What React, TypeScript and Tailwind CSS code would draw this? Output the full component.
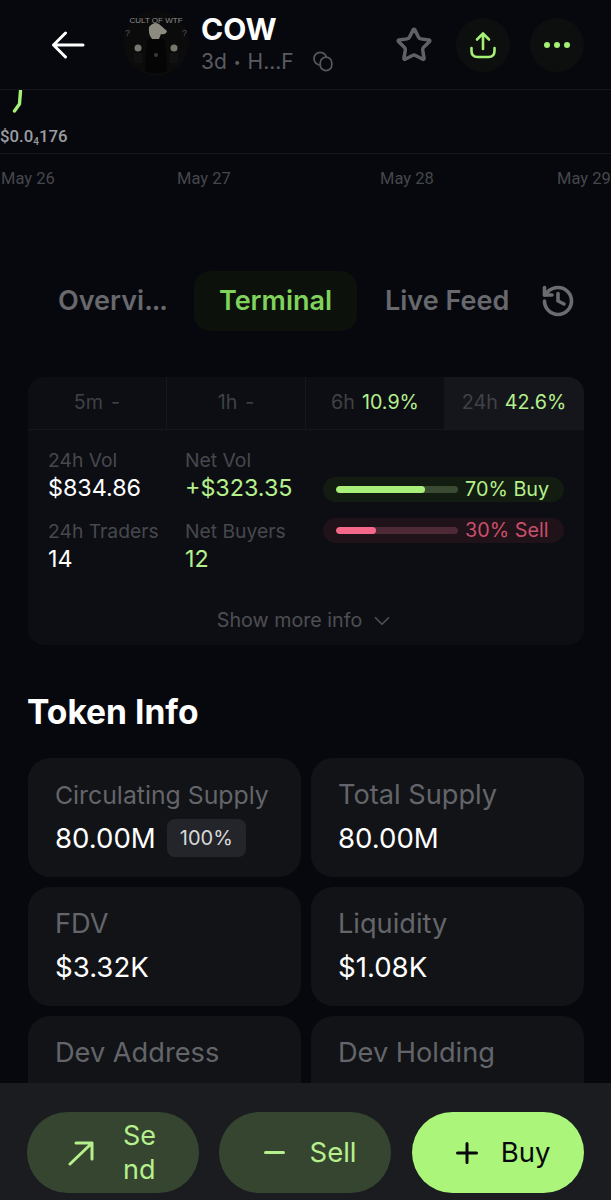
import { ChevronDown, History, Star } from "lucide-react";

const font = { fontFamily: "Inter, 'Noto Sans', sans-serif" };
const roboto = { fontFamily: "Roboto, Inter, sans-serif" };

function Avatar() {
  return (
    <svg width="68" height="68" viewBox="0 0 68 68" className="shrink-0">
      <circle cx="34" cy="34" r="33" fill="#0b0b0c" />
      <text x="34" y="14" textAnchor="middle" fontSize="8" fill="#8f8f8f" fontFamily="Liberation Sans">
        CULT OF WTF
      </text>
      <path d="M23 62 L25 32 Q34 24 43 32 L45 62 Q34 66 23 62 Z" fill="#050505" />
      <path d="M27 18 Q32 12 37 15 L45 22 Q44 26 39 25 L37 30 L30 30 Q26 25 27 18 Z" fill="#8d8a80" />
      <circle cx="16" cy="39" r="3.5" fill="#77766f" />
      <circle cx="52" cy="39" r="3.5" fill="#77766f" />
      <path d="M11 44 L21 44 L20 54 L12 54 Z" fill="#111112" />
      <path d="M47 44 L57 44 L56 54 L48 54 Z" fill="#111112" />
      <circle cx="34" cy="46" r="2" fill="#3a3a3a" />
      <text x="3" y="27" fontSize="9" fill="#555" fontFamily="Liberation Sans">?</text>
      <text x="60" y="27" fontSize="9" fill="#555" fontFamily="Liberation Sans">?</text>
    </svg>
  );
}

function CopyRings() {
  return (
    <svg width="21" height="21" viewBox="0 0 21 21" fill="none" stroke="#55575c" strokeWidth="1.8" className="ml-[19px]">
      <circle cx="7.5" cy="7.5" r="6.5" />
      <rect x="7.5" y="6" width="12" height="14" rx="6" fill="#07080d" />
    </svg>
  );
}

function Stat({ label, value, color, w }: { label: string; value: string; color: string; w: string }) {
  return (
    <div className={w}>
      <div className="text-[19.3px] leading-[24px] text-[#46484d]">{label}</div>
      <div className={`text-[23.3px] leading-[31px] ${color}`}>{value}</div>
    </div>
  );
}

function Ratio({ pct, label, wrap, track, bar, text, fill }: { pct: number; label: string; wrap: string; track: string; bar: string; text: string; fill: string }) {
  return (
    <div className={`flex h-[25px] w-[241px] items-center rounded-full pl-[13px] ${wrap}`}>
      <div className={`h-[7px] w-[122px] shrink-0 overflow-hidden rounded-full ${track}`}>
        <div className={`h-full rounded-full ${bar} ${fill}`} />
      </div>
      <span className={`ml-[7px] whitespace-nowrap text-[19.8px] ${text}`}>
        {pct}% {label}
      </span>
    </div>
  );
}

function InfoCard({ label, size = "text-[27.2px]", children }: { label: string; size?: string; children?: React.ReactNode }) {
  return (
    <div className="h-[119px] rounded-[22px] bg-[#121317] px-[27px] pt-[21px]">
      <div className={`whitespace-nowrap leading-[32px] text-[#63656a] ${size}`}>{label}</div>
      {children && <div className="mt-[8px] flex items-center text-[27.6px] leading-[38px] text-white">{children}</div>}
    </div>
  );
}

export default function App() {
  return (
    <div className="flex h-[1200px] w-[611px] flex-col overflow-hidden bg-[#07080d]" style={font}>
      {/* header */}
      <header className="flex h-[90px] shrink-0 items-center border-b border-[#15161a] pl-[51px]">
        <svg width="34" height="28" viewBox="0 0 34 28" fill="none" stroke="#fff" strokeWidth="3" strokeLinecap="round" strokeLinejoin="round" className="shrink-0">
          <path d="M32 14 H3 M14.5 2 L2.5 14 L14.5 26" />
        </svg>
        <div className="ml-[37px] -mt-1">
          <Avatar />
        </div>
        <div className="ml-[11px] -mt-[3px] w-[132px] shrink-0">
          <div className="text-[30px] font-bold leading-[34px] text-white">COW</div>
          <div className="mt-[3px] flex items-center text-[21px] leading-[26px] text-[#5a5c61]">
            3d<span className="mx-[7px] text-[12px]">•</span>H...F
            <CopyRings />
          </div>
        </div>
        <Star size={38} strokeWidth={2.2} className="ml-[62px] shrink-0 text-[#5f6166]" />
        <div className="ml-[23px] flex h-[54px] w-[54px] shrink-0 items-center justify-center rounded-full bg-[#0c0f0e]">
          <svg width="28" height="28" viewBox="0 0 28 28" fill="none" stroke="#a5f075" strokeWidth="2.6" strokeLinecap="round" strokeLinejoin="round">
            <path d="M14 18 V3 M8 8.5 L14 2.5 L20 8.5" />
            <path d="M2.5 17 V20 Q2.5 26 8.5 26 H19.5 Q25.5 26 25.5 20 V17" />
          </svg>
        </div>
        <div className="ml-[20px] flex h-[54px] w-[54px] shrink-0 items-center justify-center rounded-full bg-[#0c0f0e]">
          <div className="flex gap-[4px]">
            <span className="h-[6px] w-[6px] rounded-full bg-[#a5f075]" />
            <span className="h-[6px] w-[6px] rounded-full bg-[#a5f075]" />
            <span className="h-[6px] w-[6px] rounded-full bg-[#a5f075]" />
          </div>
        </div>
      </header>

      <main className="min-h-0 flex-1 overflow-hidden">
        {/* chart stub */}
        <div className="h-[65px] border-b border-[#15161a]" style={roboto}>
          <svg width="30" height="28" viewBox="0 0 30 28" className="ml-[8px] -mt-px" fill="none">
            <path d="M12.5 2 L11.5 15 L6.5 22" stroke="#a5f075" strokeWidth="3.4" strokeLinecap="round" />
          </svg>
          <div className="mt-[9px] text-[16.8px] font-medium leading-[20px] text-[#9b9da1]">
            $0.0<sub className="text-[10px]">4</sub>176
          </div>
        </div>
        <div className="mt-[14px] flex pl-px text-[16.5px] leading-[22px] text-[#45474c]" style={roboto}>
          <span className="w-[176px] shrink-0">May 26</span>
          <span className="w-[203px] shrink-0">May 27</span>
          <span className="w-[177px] shrink-0">May 28</span>
          <span className="whitespace-nowrap">May 29</span>
        </div>

        {/* tabs */}
        <div className="mt-[81px] flex items-center pl-[58px]">
          <span className="w-[136px] text-[27px] font-semibold text-[#67696d]">
            Overvi<span className="tracking-[-1px]">...</span>
          </span>
          <span className="flex h-[60px] w-[163px] items-center justify-center rounded-[16px] bg-[#0c110c] text-[27px] font-semibold text-[#7fd35a]">
            Terminal
          </span>
          <span className="ml-[28px] text-[27px] font-semibold text-[#67696d]">Live Feed</span>
          <History size={36} strokeWidth={2.4} className="ml-[31px] text-[#6a6c70]" />
        </div>

        {/* stats card */}
        <section className="ml-[28px] mr-[27px] mt-[46px] h-[268px] overflow-hidden rounded-[16px] bg-[#0d0e13]">
          <div className="flex h-[53px] border-b border-[#16171c] text-[19.7px]">
            <div className="flex w-[139px] items-center justify-center gap-2 border-r border-[#16171c] text-[#3f4146]">
              <span>5m</span>
              <span>-</span>
            </div>
            <div className="flex w-[139px] items-center justify-center gap-2 border-r border-[#16171c] text-[#3f4146]">
              <span>1h</span>
              <span>-</span>
            </div>
            <div className="flex w-[138px] items-center justify-center gap-[7px] text-[#3f4146]">
              <span>6h</span>
              <span className="text-[#b5f08c]">10.9%</span>
            </div>
            <div className="flex flex-1 items-center justify-center gap-[7px] bg-[#15161b] text-[#3f4146]">
              <span>24h</span>
              <span className="text-[#b5f08c]">42.6%</span>
            </div>
          </div>
          <div className="flex pl-[20px] pt-[18px]">
            <div className="flex w-[275px] flex-col gap-[16px]">
              <div className="flex">
                <Stat label="24h Vol" value="$834.86" color="text-white" w="w-[137px]" />
                <Stat label="Net Vol" value="+$323.35" color="text-[#b5f08c]" w="" />
              </div>
              <div className="flex">
                <Stat label="24h Traders" value="14" color="text-white" w="w-[137px]" />
                <Stat label="Net Buyers" value="12" color="text-[#b5f08c]" w="" />
              </div>
            </div>
            <div className="mt-[29px] flex flex-col gap-[16px]">
              <Ratio pct={70} label="Buy" wrap="bg-[#121c10]" track="bg-[#3b4a33]" bar="bg-[#a8f07a]" text="text-[#b5f08c]" fill="w-[73%]" />
              <Ratio pct={30} label="Sell" wrap="bg-[#1f1218]" track="bg-[#4d2a35]" bar="bg-[#f4688a]" text="text-[#c94f6c]" fill="w-[33%]" />
            </div>
          </div>
          <div className="mt-[32px] flex items-center justify-center text-[19.7px] text-[#4d4f54]">
            Show more info
            <ChevronDown size={26} strokeWidth={1.6} className="ml-[7px]" />
          </div>
        </section>

        {/* token info */}
        <h2 className="ml-[27px] mt-[47px] text-[33.6px] font-bold leading-[40px] text-white">Token Info</h2>
        <div className="ml-[28px] mr-[27px] mt-[26px] grid grid-cols-2 gap-x-[10px] gap-y-[10px]">
          <InfoCard label="Circulating Supply" size="text-[24.8px]">
            80.00M
            <span className="ml-[11px] rounded-[8px] bg-[#24252a] px-[13px] text-[20px] leading-[38px] text-[#d8d8d8]">100%</span>
          </InfoCard>
          <InfoCard label="Total Supply">80.00M</InfoCard>
          <InfoCard label="FDV">$3.32K</InfoCard>
          <InfoCard label="Liquidity">$1.08K</InfoCard>
          <InfoCard label="Dev Address" />
          <InfoCard label="Dev Holding" />
        </div>
      </main>

      {/* bottom actions */}
      <footer className="flex h-[117px] shrink-0 gap-[20px] bg-[#1a1c20] pl-[27px] pt-[29px]">
        <button className="flex h-[81px] w-[172px] items-center justify-center gap-[28px] rounded-full bg-[#354530] text-[#b5f08c]">
          <svg width="28" height="26" viewBox="0 0 28 26" fill="none" stroke="currentColor" strokeWidth="3" strokeLinecap="round" strokeLinejoin="round">
            <path d="M3 24 L25 3 M9 3 H25 V19" />
          </svg>
          <span className="w-[36px] break-all text-left text-[27px] leading-[34px]">Send</span>
        </button>
        <button className="flex h-[81px] w-[172px] items-center justify-center gap-[25px] rounded-full bg-[#354530] pl-[10px] text-[#b5f08c]">
          <span className="h-[3px] w-[21px] rounded-full bg-[#b5f08c]" />
          <span className="text-[27.5px]">Sell</span>
        </button>
        <button className="ml-px flex h-[81px] w-[172px] items-center justify-center gap-[23px] rounded-full bg-[#aaf57a] pl-[10px] text-[#07080d]">
          <svg width="22" height="22" viewBox="0 0 22 22" fill="none" stroke="currentColor" strokeWidth="3" strokeLinecap="round">
            <path d="M11 1.5 V20.5 M1.5 11 H20.5" />
          </svg>
          <span className="text-[27.5px]">Buy</span>
        </button>
      </footer>
    </div>
  );
}
